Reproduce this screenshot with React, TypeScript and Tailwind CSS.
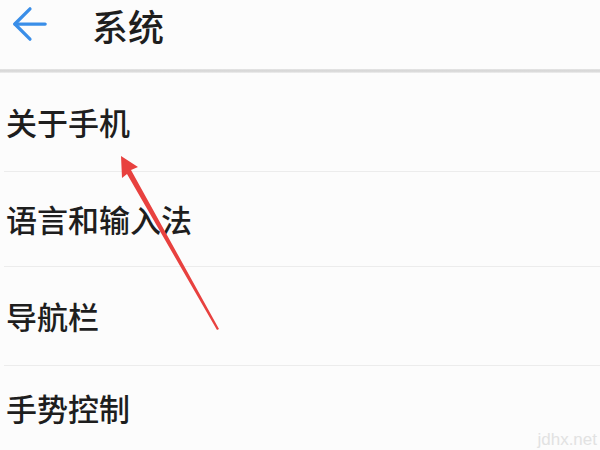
import { ArrowLeft } from 'lucide-react';

const rows = [
  { label: '关于手机', h: 'h-[99px]' },
  { label: '语言和输入法', h: 'h-[95px]' },
  { label: '导航栏', h: 'h-[99px]' },
  { label: '手势控制', h: 'h-[84px]' },
];

export default function App() {
  return (
    <div
      className="relative w-[600px] h-[450px] overflow-hidden bg-[#fcfcfc] text-[#1e1e1e]"
      style={{ fontFamily: '"Noto Sans CJK SC", "Noto Sans", sans-serif' }}
    >
      <div className="h-[69px] flex items-center">
        <ArrowLeft className="w-[52px] h-[52px] ml-[4px] -mt-[22px] text-[#3a8ee8]" strokeWidth={1.5} />
        <span className="ml-[36px] -mt-[20px] text-[36px] leading-none font-medium">系统</span>
      </div>
      <div className="h-[4px] bg-gradient-to-b from-[#e6e6e6] via-[#d4d4d4] to-[#f0f0f0]" />

      {rows.map((r, i) => (
        <div key={r.label} className={`${r.h} flex flex-col`}>
          <div className="flex-1 flex items-center pl-[6px] text-[31px] leading-none font-medium -mt-[2px]">
            {r.label}
          </div>
          {i < rows.length - 1 && <div className="h-[1px] ml-[4px] bg-[#ececec]" />}
        </div>
      ))}

      {/* red annotation arrow */}
      <svg className="absolute left-0 top-0" width="600" height="450">
        <polygon
          points="121,156 138,167 131,170 219,329 217,330 127,174 122,178"
          fill="#e8413f"
        />
      </svg>

      <span
        className="absolute right-[3px] bottom-[2px] text-[17px] leading-none text-[#e2e2e2]"
        style={{ fontFamily: '"Liberation Sans", sans-serif' }}
      >
        jdhx.net
      </span>
    </div>
  );
}
